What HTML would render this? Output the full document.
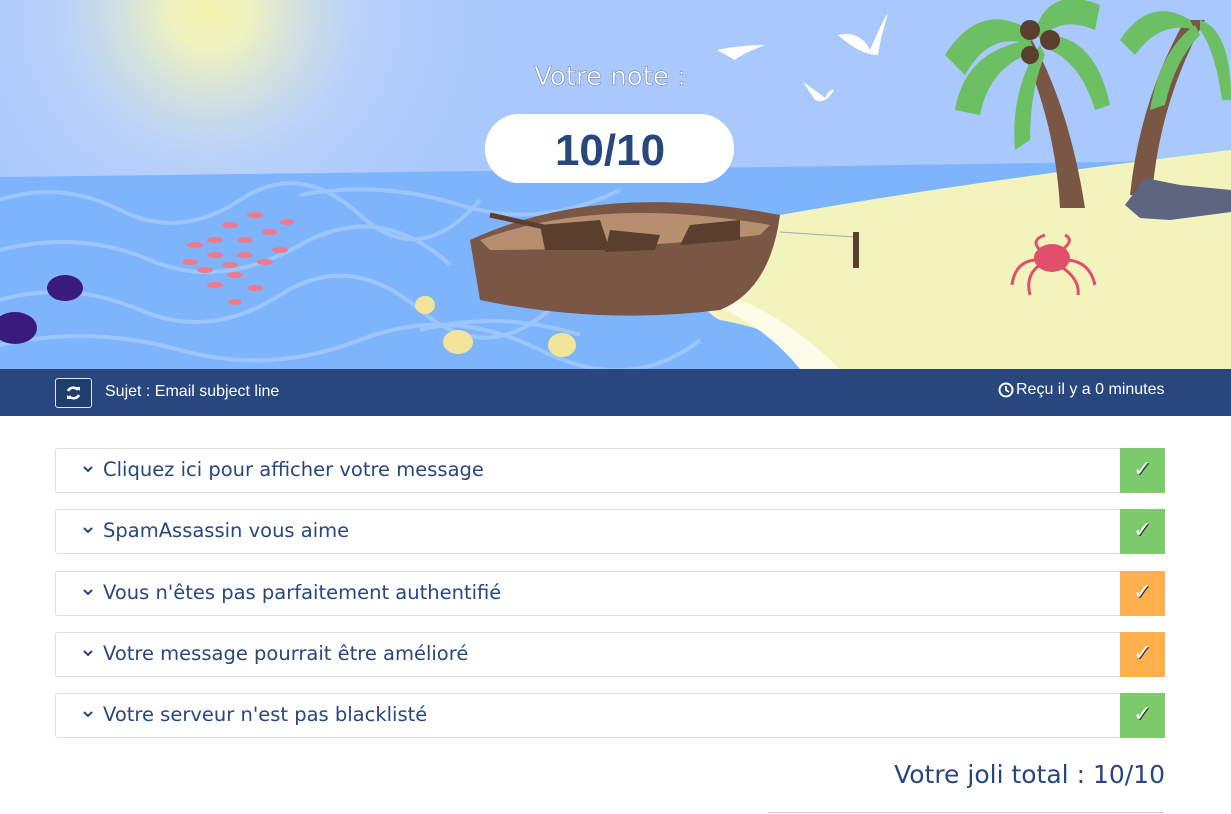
<!DOCTYPE html>
<html><head><meta charset="utf-8"><style>
*{margin:0;padding:0;box-sizing:border-box}
body{width:1231px;height:814px;overflow:hidden;background:#fff;font-family:"Liberation Sans",sans-serif;position:relative}
.hero{position:absolute;left:0;top:0;width:1231px;height:369px}
.bar{position:absolute;left:0;top:369px;width:1231px;height:47px;background:#27477e;color:#fff;font-size:16px}
.btn{position:absolute;left:55px;top:9px;width:37px;height:30px;border:1px solid #dfe5ef;border-radius:3px;background:#213d6e}
.row{position:absolute;left:55px;width:1110px;height:45px;border:1px solid #dcdfe3;border-radius:3px;background:#fff}
.row span.t{position:absolute;left:47px;top:9px;font-size:19.5px;color:#27477e;font-family:"DejaVu Sans",sans-serif}
.row svg.c{position:absolute;left:27px;top:17px}
.st{position:absolute;right:-1px;top:-1px;width:45px;height:45px;color:#fff;font-size:22px;font-weight:bold;text-align:center;line-height:44px;text-shadow:1px 1px 0 #333;font-family:"DejaVu Sans",sans-serif}
.g{background:#7ccb6a}.o{background:#ffb04c}
</style></head><body>
<svg class="hero" viewBox="0 0 1231 369" width="1231" height="369">
<defs>
<radialGradient id="sun" cx="210" cy="10" r="330" gradientUnits="userSpaceOnUse"><stop offset="0" stop-color="#f4f4b0"/><stop offset=".12" stop-color="#eef2c0"/><stop offset=".45" stop-color="#c4d8f8" stop-opacity=".6"/><stop offset="1" stop-color="#a9c8fb" stop-opacity="0"/></radialGradient>
</defs>
<rect width="1231" height="369" fill="#a9c8fb"/>
<rect width="1231" height="369" fill="url(#sun)"/>
<path d="M0 177 Q600 170 1231 160 L1231 369 L0 369Z" fill="#7db4fb"/>
<g stroke="#a8cdfb" stroke-width="4" fill="none" opacity=".7">
<path d="M0 200 Q60 180 120 210 T240 200 T360 215 T480 200"/>
<path d="M0 250 Q80 230 150 260 T300 245 T450 265"/>
<path d="M0 300 Q70 280 140 310 T280 295 T420 310 T560 300"/>
<path d="M0 345 Q90 325 180 350 T360 340 T540 350 T700 340"/>
<path d="M300 195 Q380 180 460 205 T620 190"/>
<path d="M420 330 Q500 310 580 335"/>
</g>
<path d="M700 230 Q900 190 1231 150 L1231 369 L840 369 Q780 330 720 320 Q680 300 700 230Z" fill="#f2f3bd"/>
<path d="M700 300 Q760 320 800 369 L840 369 Q790 320 740 300Z" fill="#fbfbe8"/>
<path d="M1032 40 Q1070 110 1085 208 L1060 208 Q1055 120 1020 45Z" fill="#7a5644"/>
<path d="M1205 20 Q1160 100 1152 195 L1130 195 Q1140 100 1185 20Z" fill="#7a5644"/>
<g fill="#6cbf62"><path d="M1030 30 Q980 0 945 55 L965 75 Q990 30 1030 45Z"/><path d="M1035 30 Q1050 -15 1100 5 L1095 30 Q1060 15 1040 40Z"/><path d="M1030 40 Q965 50 955 110 L980 115 Q990 65 1035 52Z"/><path d="M1045 35 Q1095 35 1110 105 L1095 110 Q1080 60 1045 48Z"/><path d="M1040 45 Q1010 90 1015 150 L1030 140 Q1030 90 1045 55Z"/><path d="M1190 20 Q1150 -5 1120 40 L1135 55 Q1160 20 1195 30Z"/><path d="M1200 20 Q1231 30 1231 100 L1222 100 Q1215 50 1200 30Z"/><path d="M1195 25 Q1160 50 1150 110 L1165 105 Q1175 60 1200 35Z"/></g>
<circle cx="1030" cy="30" r="10" fill="#5a3e2e"/><circle cx="1050" cy="40" r="10" fill="#5a3e2e"/><circle cx="1030" cy="55" r="9" fill="#5a3e2e"/>
<path d="M1125 205 L1145 178 L1180 185 L1231 190 L1231 212 L1170 220 L1140 218Z" fill="#5d6580"/>
<path d="M470 240 Q600 180 780 215 Q770 290 720 310 Q600 325 480 300Z" fill="#7a5644"/>
<path d="M480 240 Q600 195 770 225 L760 235 Q620 250 490 250Z" fill="#b68e70"/>
<path d="M540 225 L600 220 L610 250 L545 250Z M610 230 L660 235 L655 250 L605 252Z M690 225 L740 220 L740 240 L680 245Z" fill="#5a3e2e"/>
<path d="M490 215 L580 235" stroke="#5a3e2e" stroke-width="5"/>
<path d="M780 232 L855 237" stroke="#aaa" stroke-width="1"/>
<rect x="853" y="232" width="6" height="36" fill="#5a3e2e"/>
<g fill="#e0506a"><ellipse cx="1052" cy="258" rx="18" ry="14"/><path d="M1035 260 Q1015 262 1012 285 M1040 265 Q1025 275 1030 295 M1068 260 Q1090 262 1095 285 M1063 268 Q1080 280 1078 295 M1040 250 Q1030 240 1045 235 M1062 250 Q1075 240 1065 235" stroke="#e0506a" stroke-width="3" fill="none"/></g>
<g fill="#f07a8a"><ellipse cx="230" cy="225" rx="8" ry="3"/><ellipse cx="255" cy="215" rx="8" ry="3"/><ellipse cx="215" cy="240" rx="8" ry="3"/><ellipse cx="245" cy="240" rx="8" ry="3"/><ellipse cx="270" cy="232" rx="8" ry="3"/><ellipse cx="195" cy="245" rx="8" ry="3"/><ellipse cx="215" cy="255" rx="8" ry="3"/><ellipse cx="245" cy="255" rx="8" ry="3"/><ellipse cx="280" cy="250" rx="8" ry="3"/><ellipse cx="190" cy="262" rx="8" ry="3"/><ellipse cx="230" cy="265" rx="8" ry="3"/><ellipse cx="265" cy="262" rx="8" ry="3"/><ellipse cx="205" cy="270" rx="8" ry="3"/><ellipse cx="235" cy="275" rx="8" ry="3"/><ellipse cx="215" cy="285" rx="8" ry="3"/><ellipse cx="255" cy="288" rx="8" ry="3"/><ellipse cx="235" cy="302" rx="7" ry="3"/><ellipse cx="287" cy="222" rx="7" ry="3"/></g>
<g><ellipse cx="65" cy="288" rx="18" ry="13" fill="#3a1a7a"/><ellipse cx="15" cy="328" rx="22" ry="16" fill="#3a1a7a"/><ellipse cx="425" cy="305" rx="10" ry="9" fill="#f2e59a"/><ellipse cx="458" cy="342" rx="15" ry="12" fill="#f2e59a"/><ellipse cx="562" cy="345" rx="14" ry="12" fill="#f2e59a"/></g>
<g fill="#fff"><path d="M838 35 Q860 30 870 50 Q885 15 888 14 Q880 40 878 55 Q860 55 838 35Z"/><path d="M717 50 Q740 45 765 45 Q740 55 735 60Z"/><path d="M803 82 Q815 90 825 98 Q830 88 834 90 Q825 105 815 100Z"/></g>
<text x="610" y="85" text-anchor="middle" font-family="DejaVu Sans,sans-serif" font-size="26" fill="#fff" stroke="#6b7a90" stroke-width=".5">Votre note :</text>
<rect x="485" y="114" width="249" height="69" rx="34" fill="#fff"/>
<text x="610" y="165" text-anchor="middle" font-family="Liberation Sans,sans-serif" font-weight="bold" font-size="44" fill="#27477e">10/10</text>
</svg>
<div class="bar"><div class="btn"><svg width="35" height="28" viewBox="0 0 35 28"><path d="M12 12 A6 6 0 0 1 22 11 M23 16 A6 6 0 0 1 13 17" stroke="#fff" stroke-width="2.5" fill="none"/><path d="M20 8 L24 8 L24 12Z M15 20 L11 20 L11 16Z" fill="#fff"/></svg></div>
<span style="position:absolute;left:105px;top:14px">Sujet : Email subject line</span>
<svg style="position:absolute;left:998px;top:13px" width="16" height="16" viewBox="0 0 16 16"><circle cx="8" cy="8" r="6.5" stroke="#fff" stroke-width="2" fill="none"/><path d="M8 4 V8 L11 10" stroke="#fff" stroke-width="1.8" fill="none"/></svg>
<span style="position:absolute;left:1016px;top:12px">Reçu il y a 0 minutes</span></div>
<div class="row" style="top:448px"><svg class="c" width="10" height="7"><path d="M1 1 L5 5 L9 1" stroke="#27477e" stroke-width="2" fill="none"/></svg><span class="t">Cliquez ici pour afficher votre message</span><div class="st g">✓</div></div>
<div class="row" style="top:509px"><svg class="c" width="10" height="7"><path d="M1 1 L5 5 L9 1" stroke="#27477e" stroke-width="2" fill="none"/></svg><span class="t">SpamAssassin vous aime</span><div class="st g">✓</div></div>
<div class="row" style="top:571px"><svg class="c" width="10" height="7"><path d="M1 1 L5 5 L9 1" stroke="#27477e" stroke-width="2" fill="none"/></svg><span class="t">Vous n'êtes pas parfaitement authentifié</span><div class="st o">✓</div></div>
<div class="row" style="top:632px"><svg class="c" width="10" height="7"><path d="M1 1 L5 5 L9 1" stroke="#27477e" stroke-width="2" fill="none"/></svg><span class="t">Votre message pourrait être amélioré</span><div class="st o">✓</div></div>
<div class="row" style="top:693px"><svg class="c" width="10" height="7"><path d="M1 1 L5 5 L9 1" stroke="#27477e" stroke-width="2" fill="none"/></svg><span class="t">Votre serveur n'est pas blacklisté</span><div class="st g">✓</div></div>
<div style="position:absolute;right:66px;top:760px;font-size:25px;color:#27477e;font-family:'DejaVu Sans',sans-serif">Votre joli total : 10/10</div>
<div style="position:absolute;left:768px;top:812px;width:396px;height:1px;background:#ccc"></div>
</body></html>
